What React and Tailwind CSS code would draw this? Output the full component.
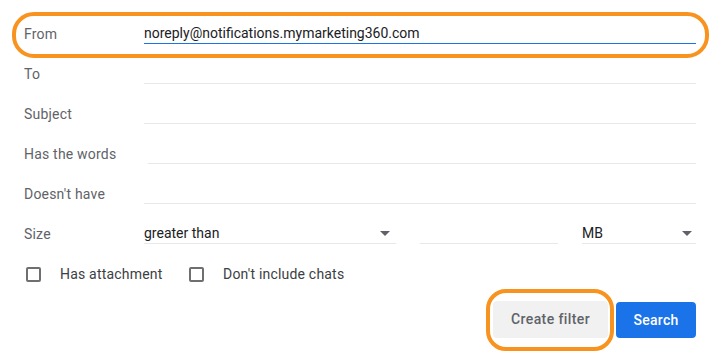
import React from "react";

const Caret = () => (
  <svg width="10" height="5" viewBox="0 0 10 5" className="shrink-0">
    <polygon points="0,0 10,0 5,5" fill="#5f6368" />
  </svg>
);

const Row = ({ label, children }) => (
  <div className="flex items-center h-10">
    <div className="w-[120px] shrink-0 text-[#5f6368] tracking-[0.2px]">{label}</div>
    {children}
  </div>
);

const Field = ({ className = "", value }) => (
  <div className={`flex-1 h-5 leading-[19px] border-b border-[#e8e8e8] text-[#202124] ${className}`}>
    {value}
  </div>
);

const Check = ({ label, className = "" }) => (
  <div className={`flex items-center ${className}`}>
    <div className="w-[15px] h-[15px] border-2 border-[#6f6f6f] rounded-[2px] ml-[2px]" />
    <span className="ml-[19px] text-[#3c4043] tracking-[0.2px]">{label}</span>
  </div>
);

export default function App() {
  return (
    <div className="w-[720px] h-[360px] bg-white px-6 pt-[14px] text-[14px] font-['Roboto','Liberation_Sans',sans-serif] overflow-hidden">
      <div className="relative">
        <div className="absolute -left-[12px] -top-[2px] -right-[13px] -bottom-[4px] border-4 border-[#f7931e] rounded-[22px]" />
        <Row label="From">
          <div className="flex-1 h-5 leading-[19px] border-b border-[#1a73e8] text-[#202124]">
            noreply@notifications.mymarketing360.com
          </div>
        </Row>
      </div>
      <Row label="To">
        <Field />
      </Row>
      <Row label="Subject">
        <Field />
      </Row>
      <Row label="Has the words">
        <Field className="ml-1" />
      </Row>
      <Row label="Doesn't have">
        <Field />
      </Row>
      <Row label="Size">
        <div className="w-[252px] h-5 leading-[19px] border-b border-[#e8e8e8] text-[#202124] flex items-center justify-between pr-[6px]">
          <span>greater than</span>
          <Caret />
        </div>
        <div className="w-[138px] h-5 border-b border-[#e8e8e8] ml-6" />
        <div className="flex-1 h-5 leading-[19px] border-b border-[#e8e8e8] text-[#202124] flex items-center justify-between pr-[4px] ml-6">
          <span>MB</span>
          <Caret />
        </div>
      </Row>
      <div className="flex items-center h-10">
        <Check label="Has attachment" className="w-[163px]" />
        <Check label="Don't include chats" />
      </div>
      <div className="flex justify-end items-start mt-[7px] gap-2">
        <div className="relative">
          <div className="absolute -left-[7px] -top-[12px] -right-[6px] -bottom-[13px] border-4 border-[#f7931e] rounded-[20px]" />
          <button className="w-[115px] h-[37px] bg-[#f1f1f1] rounded text-[#5f6368] font-medium tracking-[0.4px]">
            Create filter
          </button>
        </div>
        <button className="w-[80px] h-[36px] mt-px bg-[#1a73e8] rounded text-white font-medium tracking-[0.3px]">
          Search
        </button>
      </div>
    </div>
  );
}
